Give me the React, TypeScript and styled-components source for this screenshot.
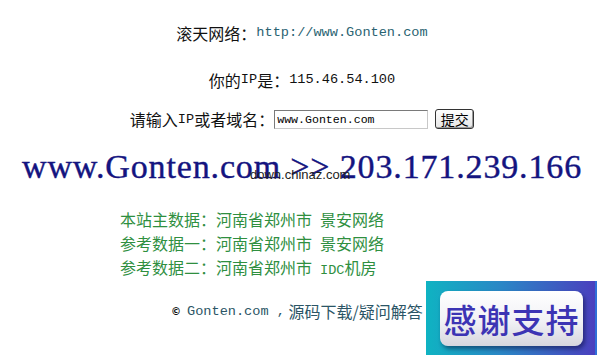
import { createGlobalStyle, styled } from 'styled-components';

const GlobalStyle = createGlobalStyle`
  html, body {
    margin: 0;
    padding: 0;
    background: #ffffff;
  }

  body {
    font-family: 'Noto Sans CJK SC', sans-serif;
    font-size: 16px;
    color: #111111;
  }
`;

const SPage = styled.div`
  position: relative;
  width: 604px;
  height: 355px;
  overflow: hidden;
`;

const SLine = styled.div<{ $top: number; $height?: number }>`
  display: flex;
  justify-content: center;
  align-items: center;
  height: ${({ $height }) => $height ?? 20}px;
  margin-top: ${({ $top }) => $top}px;
  line-height: 20px;
  white-space: nowrap;
`;

const SMono = styled.span<{ $color?: string }>`
  font-family: 'Liberation Mono', monospace;
  font-size: 13.6px;
  color: ${({ $color }) => $color ?? 'inherit'};
`;

const SForm = styled.form`
  display: flex;
  align-items: center;
  justify-content: center;
  height: 22px;
  margin-top: 18px;
  white-space: nowrap;
`;

const SInput = styled.input`
  box-sizing: border-box;
  width: 154px;
  height: 19px;
  margin: 0 7px 0 0;
  padding: 0 2px;
  border: 1px solid #7a7a7a;
  border-right-color: #c8c8c8;
  border-bottom-color: #c8c8c8;
  font-family: 'Liberation Mono', monospace;
  font-size: 11.6px;
  color: #000000;
  outline: none;
`;

const SButton = styled.button`
  box-sizing: border-box;
  width: 39px;
  height: 20px;
  padding: 0;
  border: 1px solid #333333;
  border-radius: 3px;
  background: linear-gradient(#ffffff, #e6e6e6);
  box-shadow: inset -1px -1px 0 #9a9a9a;
  font-family: 'Noto Sans CJK SC', sans-serif;
  font-size: 14px;
  line-height: 16px;
  color: #000000;
`;

const SResult = styled.div`
  position: relative;
  display: flex;
  justify-content: center;
  align-items: center;
  height: 40px;
  margin-top: 17px;
  font-family: 'Liberation Serif', serif;
  font-size: 34px;
  letter-spacing: 0.85px;
  color: #141480;
  -webkit-text-stroke: 0.4px #141480;
  white-space: nowrap;
`;

const SWatermark = styled.span`
  position: absolute;
  left: 250px;
  top: 21px;
  font-family: 'Liberation Sans', sans-serif;
  font-size: 13px;
  letter-spacing: 0;
  line-height: 14px;
  color: #222222;
  -webkit-text-stroke: 0;
`;

const SData = styled.div`
  display: flex;
  flex-direction: column;
  margin-top: 20px;
  padding-left: 120px;
  color: #2f8f3f;
  line-height: 24px;
  white-space: nowrap;
`;

const SOrg = styled.span`
  margin-left: 8px;
`;

const SFooter = styled.div`
  display: flex;
  align-items: center;
  height: 20px;
  margin-top: 18px;
  padding-left: 171px;
  color: #2b5566;
  white-space: nowrap;
`;

const SCopy = styled.span`
  margin-right: 6px;
  font-family: 'DejaVu Sans', sans-serif;
  font-size: 10px;
  font-weight: bold;
  color: #111111;
`;

const SBadge = styled.div`
  position: absolute;
  left: 426px;
  top: 281px;
  width: 171px;
  height: 74px;
  padding: 10px 0 0 14px;
  box-sizing: border-box;
  background: linear-gradient(90deg, #0fb3c2 0%, #2b86c6 45%, #4a3fbe 100%);
  border-right: 2px solid #2f6fd8;
`;

const SBadgeButton = styled.div`
  display: flex;
  align-items: center;
  justify-content: center;
  width: 143px;
  height: 55px;
  border-radius: 8px;
  background: linear-gradient(180deg, #ffffff 0%, #f1f1f5 55%, #d6d6de 100%);
  box-shadow: 2px 3px 4px rgba(0, 0, 40, 0.45);
  font-family: 'Noto Sans CJK SC', sans-serif;
  font-size: 33px;
  font-weight: 500;
  letter-spacing: 1px;
  color: #3c34b4;
`;

const records = [
  { label: '本站主数据：', org: <>景安网络</> },
  { label: '参考数据一：', org: <>景安网络</> },
  { label: '参考数据二：', org: <><SMono>IDC</SMono>机房</> },
];

const App = () => (
  <SPage>
    <GlobalStyle />
    <SLine $top={23}>
      滚天网络：<SMono $color='#2a6372'>http://www.Gonten.com</SMono>
    </SLine>
    <SLine $top={27}>
      你的<SMono>IP</SMono>是：<SMono>115.46.54.100</SMono>
    </SLine>
    <SForm onSubmit={(e) => e.preventDefault()}>
      请输入<SMono>IP</SMono>或者域名：
      <SInput defaultValue='www.Gonten.com' />
      <SButton type='submit'>提交</SButton>
    </SForm>
    <SResult>
      www.Gonten.com &gt;&gt; 203.171.239.166
      <SWatermark>down.chinaz.com</SWatermark>
    </SResult>
    <SData>
      {records.map((record) => (
        <div key={record.label}>
          {record.label}河南省郑州市<SOrg>{record.org}</SOrg>
        </div>
      ))}
    </SData>
    <SFooter>
      <SCopy>©</SCopy>
      <SMono>Gonten.com ,</SMono>&nbsp;源码下载/疑问解答
    </SFooter>
    <SBadge>
      <SBadgeButton>感谢支持</SBadgeButton>
    </SBadge>
  </SPage>
);

export default App;
